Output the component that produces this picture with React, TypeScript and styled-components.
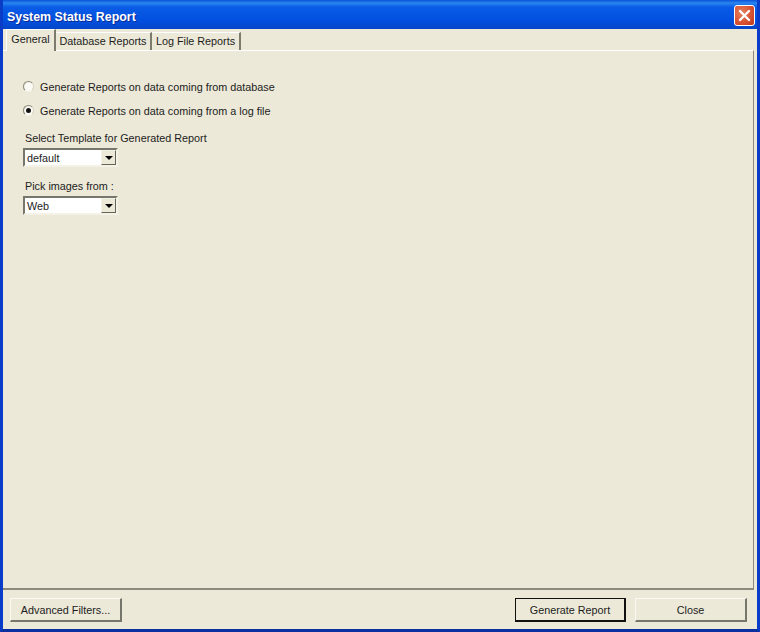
import React from "react";
import styled, { createGlobalStyle } from "styled-components";

const GlobalStyle = createGlobalStyle`
  html, body {
    margin: 0;
    padding: 0;
    background: #0a3fc4;
  }
`;

const Window = styled.div`
  width: 760px;
  height: 632px;
  box-sizing: border-box;
  display: flex;
  flex-direction: column;
  overflow: hidden;
  font-family: "Liberation Sans", Arial, sans-serif;
  font-size: 10.8px;
  color: #1c1c1c;
  background: #0a3fd0;
  border-left: 3px solid #0a3cc8;
  border-right: 3px solid #0a3cc8;
  border-bottom: 3px solid #0a2f9e;
`;

const TitleBar = styled.div`
  height: 29px;
  flex: none;
  margin: 0 -3px;
  padding: 0 5px 0 7px;
  display: flex;
  align-items: center;
  justify-content: space-between;
  background: linear-gradient(to bottom, #0a52d8 0, #2a86f0 3px, #0a5ce6 7px, #0250e0 20px, #0546c8 29px);
`;

const Title = styled.div`
  color: #fff;
  font-weight: bold;
  font-size: 12.4px;
  padding-top: 5px;
  text-shadow: 1px 1px 0 #0a2a90;
`;

const CloseButton = styled.div`
  width: 19px;
  height: 19px;
  margin-top: 2px;
  border: 1px solid #fff;
  border-radius: 3px;
  background: radial-gradient(circle at 35% 35%, #e8805c, #d2492a 70%, #b83a1e);
  display: flex;
  align-items: center;
  justify-content: center;
`;

const Dialog = styled.div`
  flex: 1;
  display: flex;
  flex-direction: column;
  background: #ece9d8;
`;

const TabRow = styled.div`
  height: 21px;
  flex: none;
  display: flex;
  align-items: flex-end;
  padding-left: 3px;
  position: relative;
  z-index: 1;
`;

const Tab = styled.div<{ $active?: boolean; $width: number }>`
  width: ${({ $width }) => $width}px;
  height: ${({ $active }) => ($active ? 22 : 18)}px;
  margin-bottom: ${({ $active }) => ($active ? -1 : 0)}px;
  box-sizing: border-box;
  display: flex;
  align-items: center;
  justify-content: center;
  padding-bottom: ${({ $active }) => ($active ? 4 : 2)}px;
  background: #ece9d8;
  border-right: 2px solid #7d7b6c;
  border-left: ${({ $active }) => ($active ? "1px solid #fff" : "none")};
  border-top: 1px solid #fff;
`;

const TabPanel = styled.div`
  flex: 1;
  margin-right: 3px;
  padding: 24px 0 0 20px;
  border-top: 1px solid #fff;
  border-right: 1px solid #8c8a7c;
  display: flex;
  flex-direction: column;
`;

const RadioRow = styled.label`
  height: 24px;
  display: flex;
  align-items: center;
  gap: 6px;
`;

const RadioDot = styled.span<{ $checked?: boolean }>`
  width: 11px;
  height: 11px;
  margin-top: -2px;
  box-sizing: border-box;
  border-radius: 50%;
  flex: none;
  display: flex;
  align-items: center;
  justify-content: center;
  background: radial-gradient(circle at 60% 60%, #fbfaf5 55%, #e2dfd0);
  border: 1px solid;
  border-color: #8a887a #d8d5c4 #f4f2e6 #8a887a;

  &::after {
    content: "";
    display: ${({ $checked }) => ($checked ? "block" : "none")};
    width: 5px;
    height: 5px;
    border-radius: 50%;
    background: #111;
  }
`;

const FieldLabel = styled.div<{ $gap: number }>`
  margin: ${({ $gap }) => $gap}px 0 0 2px;
  height: 14px;
  line-height: 14px;
`;

const ComboBox = styled.div`
  width: 95px;
  height: 19px;
  margin-top: 3px;
  box-sizing: border-box;
  display: flex;
  align-items: center;
  justify-content: space-between;
  background: #fff;
  border: 2px solid;
  border-color: #77766c #f4f2e6 #f4f2e6 #77766c;
  padding: 0 0 0 2px;
`;

const ComboArrow = styled.span`
  width: 15px;
  height: 15px;
  box-sizing: border-box;
  display: flex;
  align-items: center;
  justify-content: center;
  background: #ece9d8;
  border: 1px solid;
  border-color: #f4f2e6 #66655a #66655a #f4f2e6;

  &::after {
    content: "";
    border-left: 4px solid transparent;
    border-right: 4px solid transparent;
    border-top: 4px solid #000;
  }
`;

const Footer = styled.div`
  height: 41px;
  flex: none;
  box-sizing: border-box;
  margin-right: 3px;
  padding: 8px 7px 0 7px;
  border-top: 2px solid #8c8a7c;
  display: flex;
  justify-content: space-between;
  align-items: flex-start;
`;

const FooterRight = styled.div`
  display: flex;
  gap: 9px;
`;

const Button = styled.div<{ $width: number; $default?: boolean }>`
  width: ${({ $width }) => $width}px;
  height: 24px;
  box-sizing: border-box;
  display: flex;
  align-items: center;
  justify-content: center;
  background: #ece9d8;
  border-style: solid;
  border-width: 1px 2px 2px 1px;
  border-color: ${({ $default }) =>
    $default ? "#111 #111 #111 #111" : "#fbfaf2 #77766c #77766c #fbfaf2"};
`;

const CloseX = () => (
  <svg width="13" height="13" viewBox="0 0 13 13">
    <path d="M2 2 L11 11 M11 2 L2 11" stroke="#fff" strokeWidth="2.4" strokeLinecap="round" />
  </svg>
);

const App = () => (
  <>
    <GlobalStyle />
    <Window>
      <TitleBar>
        <Title>System Status Report</Title>
        <CloseButton>
          <CloseX />
        </CloseButton>
      </TitleBar>
      <Dialog>
        <TabRow>
          <Tab $active $width={50}>General</Tab>
          <Tab $width={96}>Database Reports</Tab>
          <Tab $width={89}>Log File Reports</Tab>
        </TabRow>
        <TabPanel>
          <RadioRow>
            <RadioDot />
            Generate Reports on data coming from database
          </RadioRow>
          <RadioRow>
            <RadioDot $checked />
            Generate Reports on data coming from a log file
          </RadioRow>
          <FieldLabel $gap={8}>Select Template for Generated Report</FieldLabel>
          <ComboBox>
            default
            <ComboArrow />
          </ComboBox>
          <FieldLabel $gap={12}>Pick images from :</FieldLabel>
          <ComboBox>
            Web
            <ComboArrow />
          </ComboBox>
        </TabPanel>
        <Footer>
          <Button $width={112}>Advanced Filters...</Button>
          <FooterRight>
            <Button $default $width={111}>Generate Report</Button>
            <Button $width={112}>Close</Button>
          </FooterRight>
        </Footer>
      </Dialog>
    </Window>
  </>
);

export default App;
